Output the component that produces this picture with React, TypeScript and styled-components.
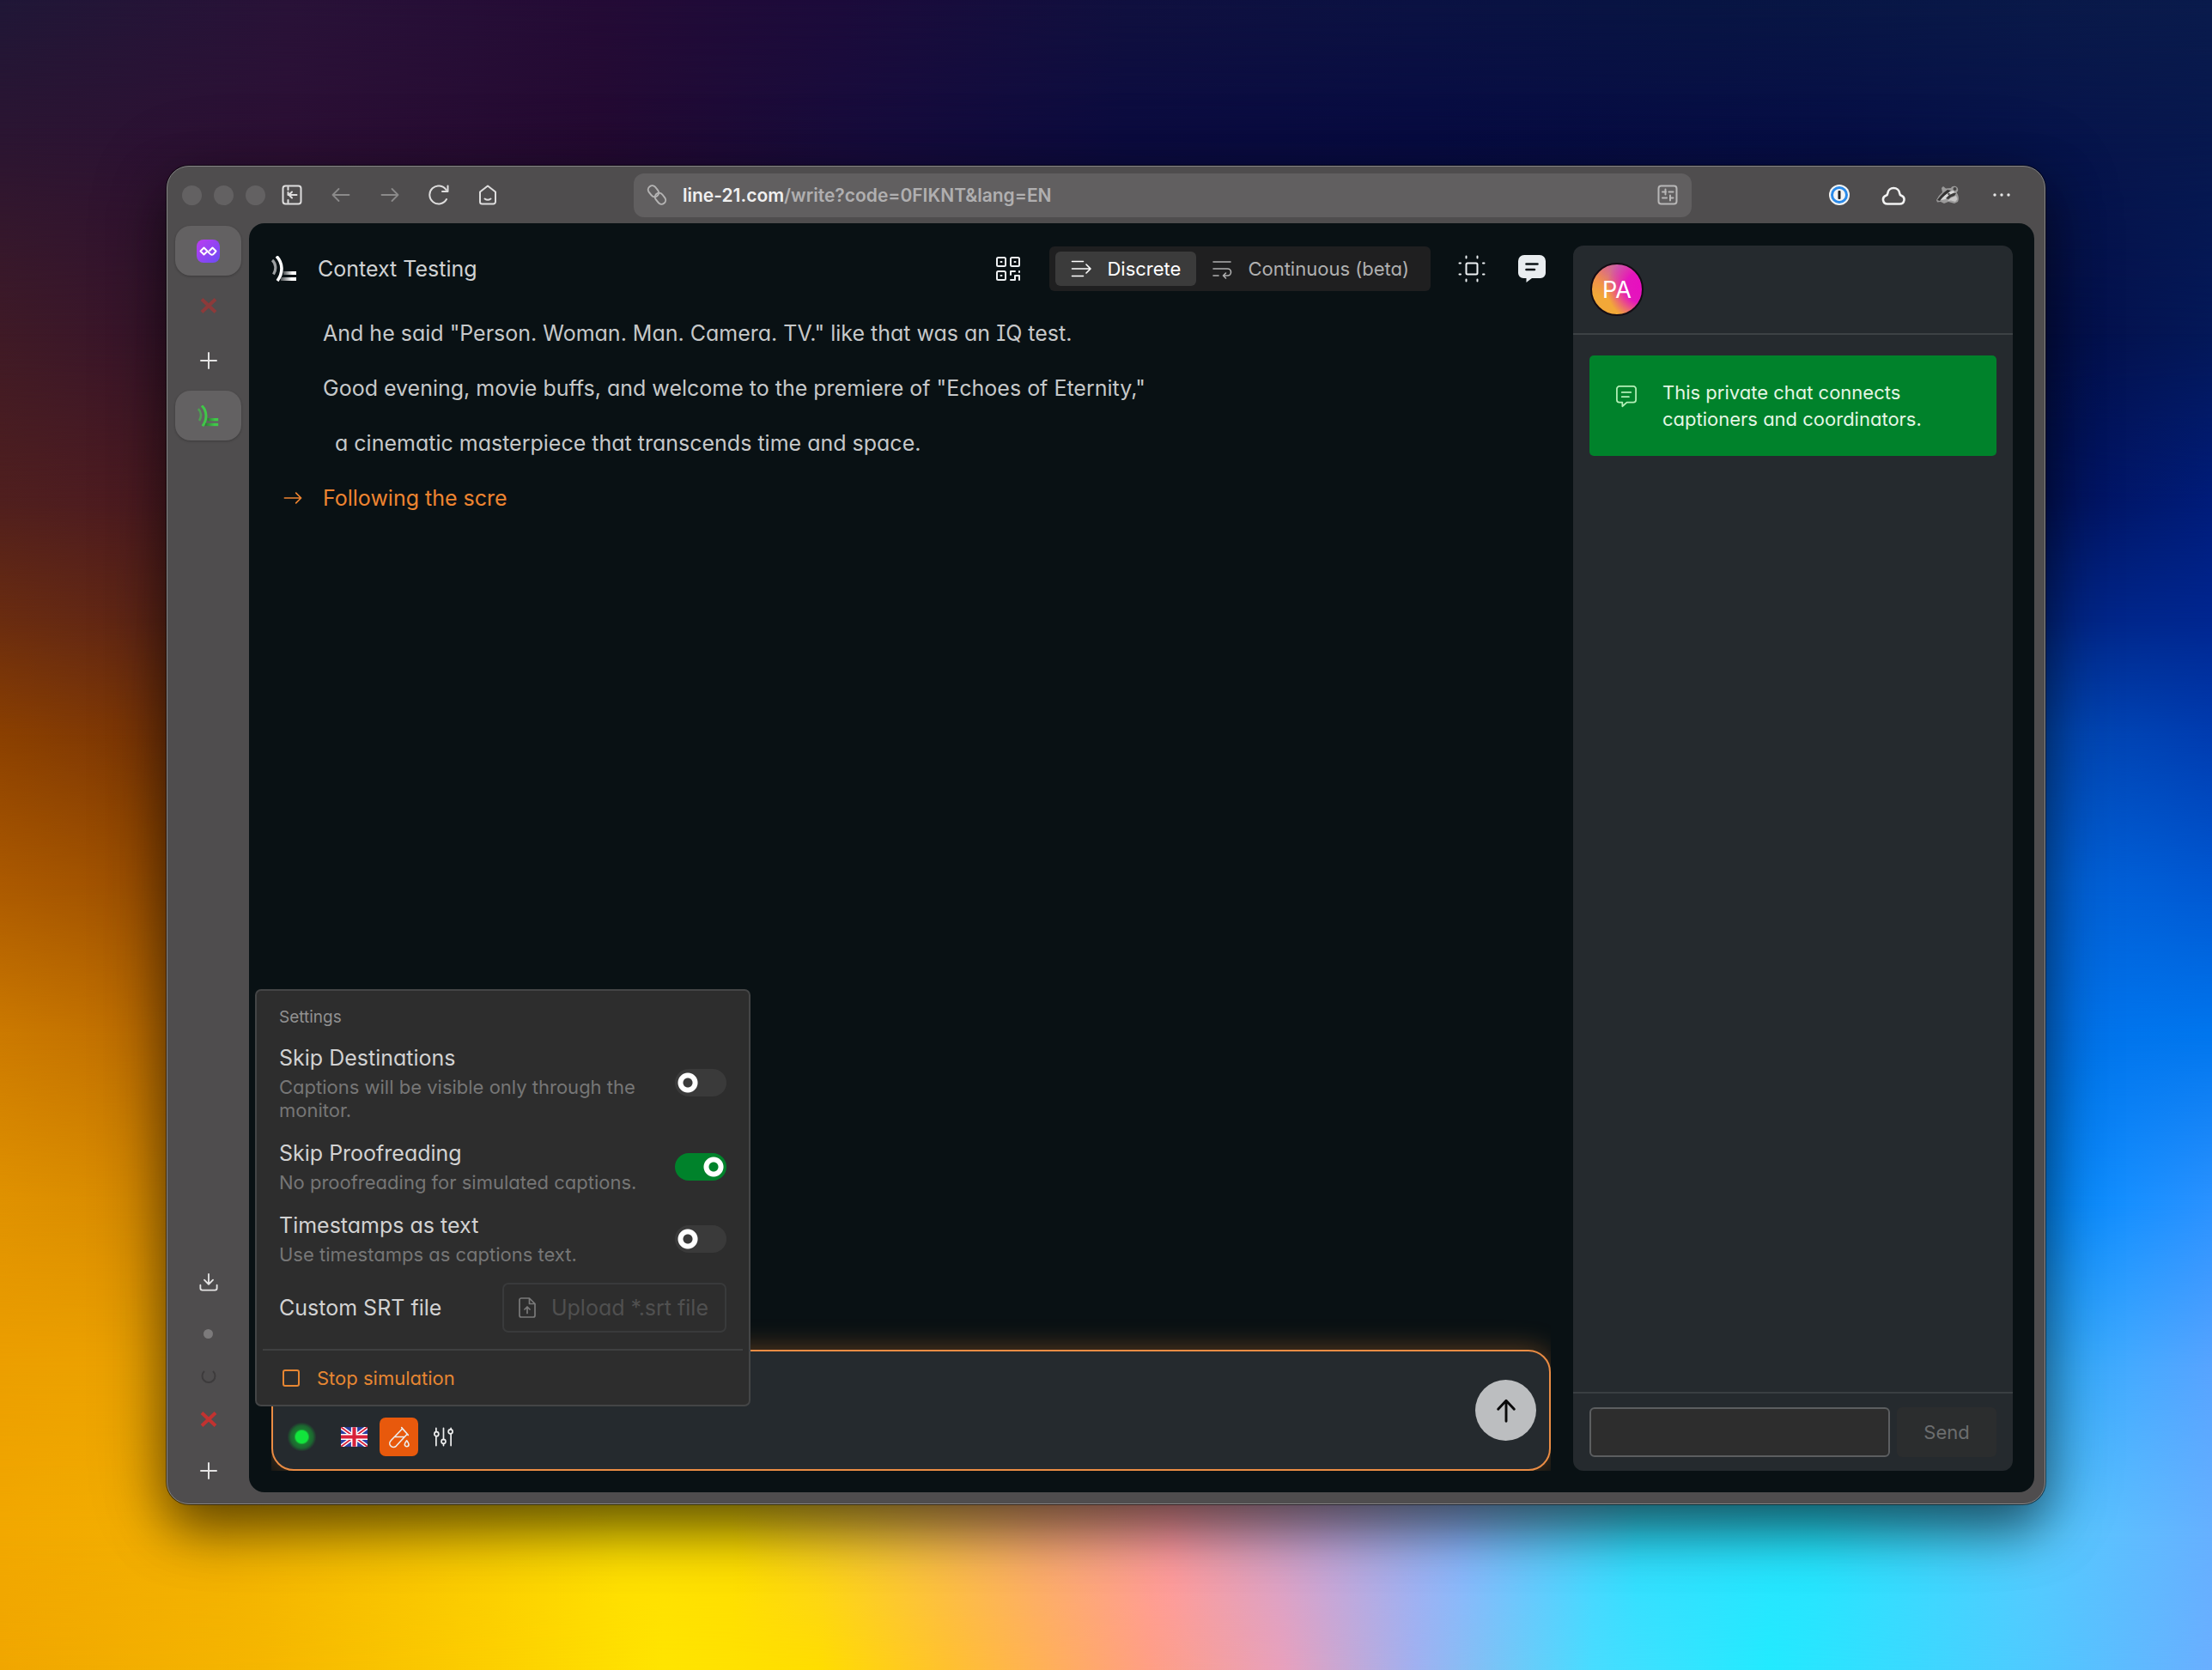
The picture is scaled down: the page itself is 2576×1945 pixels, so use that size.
import React, { useState } from "react";
import styled, { createGlobalStyle, css } from "styled-components";

const color = {
  chrome: "#4f4d4e",
  chromeRaised: "#636162",
  canvas: "#091114",
  panel: "#252a2e",
  popover: "#2d2d2d",
  orange: "#ee8430",
  green: "#00822b",
};

const GlobalStyle = createGlobalStyle`
  *, *::before, *::after { box-sizing: border-box; }
  body {
    margin: 0;
    font-family: Inter, "Liberation Sans", sans-serif;
    font-size: 22px;
    color: #c9cbcc;
    font-feature-settings: "cv11", "cv08";
    -webkit-font-smoothing: antialiased;
  }
  button, input, textarea { font: inherit; font-feature-settings: inherit; color: inherit; margin: 0; }
  button { cursor: pointer; border: 0; background: none; padding: 0; }
  h1, h2, p, ol { margin: 0; padding: 0; font-weight: 400; }
  svg { display: block; }
`;

/* ---------- wallpaper ---------- */

type Band = { at: number; stops: string };

const bands: Band[] = [
  { at: 0, stops: "#201737 0%, #291238 13%, #240b36 27%, #1c0b3b 38%, #10103f 51%, #0b1243 64%, #081543 77%, #0a1b4c 100%" },
  { at: 8, stops: "#2b1532 0%, #2c1035 13%, #240a32 27%, #180c3c 38%, #0c0c40 51%, #080c42 64%, #070f46 83%, #07184e 100%" },
  { at: 20, stops: "#3f1a26 0%, #37142c 8%, #250c36 30%, #0a0c40 55%, #040e48 92%, #041858 100%" },
  { at: 30, stops: "#501f1e 0%, #4b1a22 8%, #260c36 50%, #02125a 92%, #001c7a 100%" },
  { at: 37, stops: "#6a2c10 0%, #5c2418 8%, #260c36 50%, #002684 92%, #002690 100%" },
  { at: 44, stops: "#8b4000 0%, #783408 8%, #402030 50%, #004cb8 92%, #003cb0 100%" },
  { at: 53, stops: "#ac5a00 0%, #9a4e00 8%, #604030 50%, #0066dc 92%, #0058d2 100%" },
  { at: 62, stops: "#cc7a00 0%, #bc6c00 8%, #806030 50%, #0074ec 92%, #0076ee 100%" },
  { at: 72, stops: "#e09200 0%, #d68a00 8%, #c0a060 50%, #008cff 92%, #2a92ff 100%" },
  { at: 82, stops: "#ec9f00 0%, #eca400 8%, #e8c020 30%, #ee9a90 52%, #40b8f0 80%, #34b0ff 93%, #58a4ff 100%" },
  { at: 92, stops: "#f2a800 0%, #f3b200 10%, #fac800 19%, #ffe000 28%, #ffdf00 33%, #fbc83a 40%, #fbac74 47%, #ff9ca4 53%, #c4a8dc 60%, #8cb8ff 66%, #30e0ff 74%, #26e6ff 82%, #56ccff 92%, #66b0ff 100%" },
  { at: 100, stops: "#f0a600 0%, #f5b600 12%, #fcce00 22%, #ffe400 30%, #ffdd00 37%, #ffc030 43%, #ff9e84 52%, #e8a0bc 58%, #a0b0f0 64%, #48dcff 72%, #22eaff 80%, #4cccff 91%, #6aaeff 100%" },
];

const WallpaperBand = styled.div<{ $stops: string; $from: number; $to: number }>`
  grid-area: 1 / 1;
  background: linear-gradient(90deg, ${(p) => p.$stops});
  ${(p) =>
    p.$to > 0 &&
    css`
      mask-image: linear-gradient(180deg, transparent ${p.$from}%, #000 ${p.$to}%);
    `}
`;

const Desktop = styled.div`
  display: grid;
  grid-template-columns: minmax(0, 1fr);
  min-height: 100vh;
`;

const DesktopArea = styled.div`
  grid-area: 1 / 1;
  z-index: 1;
  display: flex;
  padding: 193px 194px;
`;

/* ---------- browser chrome ---------- */

const BrowserWindow = styled.div`
  flex: 1;
  display: flex;
  flex-direction: column;
  background: ${color.chrome};
  border: 1px solid #858485;
  border-radius: 26px;
  box-shadow: 0 0 0 1px rgba(0, 0, 0, 0.55), 0 30px 60px rgba(0, 0, 0, 0.5), 0 10px 90px rgba(0, 0, 0, 0.25);
`;

const Toolbar = styled.div`
  display: flex;
  align-items: center;
  height: 66px;
`;

const ToolbarStart = styled.div`
  display: flex;
  align-items: center;
  width: 543px;
  padding-left: 17px;
`;

const TrafficLights = styled.div`
  display: flex;
  gap: 14px;
  margin-right: 19px;
`;

const Light = styled.span`
  width: 23px;
  height: 23px;
  border-radius: 50%;
  background: #636162;
`;

const NavButtons = styled.div`
  display: flex;
  gap: 33px;
`;

const IconButton = styled.button<{ $tone?: string; $size?: number }>`
  display: grid;
  place-items: center;
  width: ${(p) => p.$size ?? 24}px;
  height: ${(p) => p.$size ?? 24}px;
  color: ${(p) => p.$tone ?? "#dedddd"};
`;

const AddressBar = styled.div`
  flex: 1;
  display: flex;
  align-items: center;
  height: 51px;
  padding: 0 16px 0 15px;
  border-radius: 12px;
  background: #615f60;
  color: #b4b3b3;
`;

const Address = styled.span`
  flex: 1;
  margin-left: 18px;
  font-size: 21px;
  font-weight: 600;
  font-feature-settings: normal;
  color: #b0afb0;
`;

const Host = styled.span`
  color: #f0f0f0;
`;

const Extensions = styled.div`
  display: flex;
  justify-content: flex-end;
  align-items: center;
  gap: 35px;
  width: 411px;
  padding-right: 36px;
`;

const Body = styled.div`
  flex: 1;
  display: flex;
  padding-right: 12px;
`;

const Sidebar = styled.nav`
  display: flex;
  flex-direction: column;
  align-items: center;
  gap: 6px;
  width: 95px;
  padding: 3px 0 9px;
`;

const SideTab = styled.button<{ $raised?: boolean }>`
  display: grid;
  place-items: center;
  width: 77px;
  height: 58px;
  border-radius: 18px;
  color: #e4e3e3;
  ${(p) =>
    p.$raised &&
    css`
      background: ${color.chromeRaised};
      box-shadow: 0 1px 3px rgba(0, 0, 0, 0.25);
    `}
`;

const Spacer = styled.div`
  flex: 1;
`;

const SideStatus = styled.div`
  display: grid;
  grid-auto-rows: 50px;
  place-items: center;
`;

const StatusDot = styled.span`
  width: 11px;
  height: 11px;
  border-radius: 50%;
  background: #7c7a7b;
`;

/* ---------- page ---------- */

const Page = styled.main`
  flex: 1;
  display: flex;
  gap: 26px;
  min-width: 0;
  margin-bottom: 13px;
  padding: 26px 25px 25px 26px;
  border-radius: 18px;
  background: ${color.canvas};
`;

const Writer = styled.section`
  flex: 1;
  display: flex;
  flex-direction: column;
  min-width: 0;
`;

const Header = styled.header`
  display: flex;
  align-items: center;
  gap: 28px;
  height: 53px;
`;

const Brand = styled.div`
  flex: 1;
  display: flex;
  align-items: center;
  gap: 24px;
`;

const Title = styled.h1`
  font-size: 25px;
  line-height: 34px;
  color: #d0d2d3;
`;

const Segments = styled.div`
  display: flex;
  height: 52px;
  padding: 6px 7px;
  border-radius: 6px;
  background: #1f1f20;
`;

const Segment = styled.button<{ $active?: boolean }>`
  display: flex;
  align-items: center;
  gap: 18px;
  height: 40px;
  padding: 0 18px;
  border-radius: 6px;
  color: ${(p) => (p.$active ? "#ffffff" : "#b0b0b0")};
  background: ${(p) => (p.$active ? "#3b3b3b" : "transparent")};
`;

const Captions = styled.ol`
  flex: 1;
  padding-top: 17px;
  list-style: none;
  font-size: 25px;
  line-height: 64px;
`;

const Caption = styled.li<{ $live?: boolean; $nested?: boolean }>`
  display: flex;
  align-items: center;
  padding-left: ${(p) => (p.$nested ? 14 : 0)}px;
  color: ${(p) => (p.$live ? color.orange : "#c6c8c9")};
`;

const CaptionGutter = styled.span`
  display: flex;
  width: 60px;
  padding-left: 14px;
`;

const ComposerDock = styled.div`
  position: relative;
`;

const Composer = styled.form`
  display: flex;
  align-items: center;
  height: 141px;
  padding-right: 15px;
  border: 2px solid #ea8c44;
  border-radius: 26px;
  background: ${color.panel};
  box-shadow: 0 0 32px rgba(238, 132, 48, 0.4);
  clip-path: inset(-60px 0 0 0);
`;

const ComposerMain = styled.div`
  flex: 1;
  align-self: stretch;
  display: flex;
  flex-direction: column;
  padding: 12px 12px 15px 11px;
`;

const ComposerInput = styled.textarea`
  flex: 1;
  min-height: 0;
  border: 0;
  outline: 0;
  resize: none;
  background: transparent;
`;

const ComposerTools = styled.div`
  display: flex;
  align-items: center;
  gap: 7px;
`;

const LiveDot = styled.span`
  width: 45px;
  height: 45px;
  margin-right: 9px;
  background: radial-gradient(circle, #12e43c 7px, #1b7a30 9px, #1c6630 13px, transparent 17px);
`;

const ToolButton = styled.button<{ $active?: boolean }>`
  display: grid;
  place-items: center;
  width: 45px;
  height: 45px;
  border-radius: 7px;
  color: #eceded;
  background: ${(p) => (p.$active ? "#e8590c" : "transparent")};
`;

const SubmitButton = styled.button`
  display: grid;
  place-items: center;
  width: 71px;
  height: 71px;
  border-radius: 50%;
  color: #0a0a0a;
  background: #bcbec0;
`;

/* ---------- settings popover ---------- */

const Popover = styled.div`
  position: absolute;
  left: -19px;
  bottom: 75px;
  z-index: 2;
  width: 577px;
  border: 2px solid #444546;
  border-radius: 7px;
  background: ${color.popover};
`;

const PopoverTitle = styled.h2`
  padding: 17px 26px;
  font-size: 19px;
  line-height: 27px;
  color: #919191;
`;

const SettingList = styled.div`
  display: flex;
  flex-direction: column;
  gap: 19px;
  padding: 0 26px 19px;
`;

const SettingRow = styled.div`
  display: flex;
  align-items: center;
  justify-content: space-between;
  gap: 24px;
`;

const SettingText = styled.div`
  display: flex;
  flex-direction: column;
  gap: 4px;
`;

const SettingLabel = styled.label`
  font-size: 25px;
  line-height: 34px;
  color: #d2d2d2;
`;

const SettingHint = styled.p`
  line-height: 27px;
  color: #767676;
`;

const Toggle = styled.input`
  --track: #3a3a3a;
  flex: none;
  appearance: none;
  width: 60px;
  height: 32px;
  border-radius: 16px;
  cursor: pointer;
  background: radial-gradient(circle at 15px 16px, var(--track) 5px, #fff 6px, #fff 11px, transparent 12px), var(--track);
  &:checked {
    --track: ${color.green};
    background: radial-gradient(circle at 45px 16px, var(--track) 5px, #fff 6px, #fff 11px, transparent 12px), var(--track);
  }
`;

const UploadButton = styled.button`
  display: flex;
  align-items: center;
  gap: 16px;
  height: 58px;
  padding: 0 19px 0 15px;
  border: 2px solid #393a3b;
  border-radius: 7px;
  font-size: 25px;
  color: #505050;
  svg { color: #7a7a7a; }
`;

const Divider = styled.hr`
  height: 2px;
  margin: 0 7px;
  border: 0;
  background: #3f4041;
`;

const StopButton = styled.button`
  display: flex;
  align-items: center;
  gap: 20px;
  width: 100%;
  height: 63px;
  padding: 0 30px;
  color: #e68632;
`;

/* ---------- chat ---------- */

const Chat = styled.aside`
  display: flex;
  flex-direction: column;
  width: 512px;
  border-radius: 12px;
  background: ${color.panel};
`;

const ChatHeader = styled.div`
  display: flex;
  align-items: center;
  height: 104px;
  padding: 0 20px;
  border-bottom: 2px solid #3c4144;
`;

const Avatar = styled.div`
  display: grid;
  place-items: center;
  width: 62px;
  height: 62px;
  border: 2px solid #140c14;
  border-radius: 50%;
  font-size: 27px;
  color: #fff;
  background:
    radial-gradient(circle at 100% 45%, #e80ec0 0%, #e416bc 28%, rgba(228, 22, 188, 0) 62%),
    radial-gradient(circle at 55% 5%, #c866a8 0%, rgba(200, 102, 168, 0) 45%),
    linear-gradient(200deg, #e0508c 0%, #f08850 38%, #f2a838 70%);
`;

const ChatLog = styled.div`
  flex: 1;
  padding: 24px 19px;
`;

const Notice = styled.div`
  display: flex;
  gap: 28px;
  padding: 28px 29px 27px;
  border-radius: 5px;
  line-height: 31px;
  color: #e4f6e4;
  background: ${color.green};
`;

const NoticeIcon = styled.span`
  padding-top: 5px;
  color: #b4f0b8;
`;

const ChatForm = styled.form`
  display: flex;
  gap: 8px;
  padding: 16px 19px;
  border-top: 2px solid #3a3f42;
`;

const ChatInput = styled.input`
  flex: 1;
  min-width: 0;
  height: 58px;
  padding: 0 16px;
  border: 2px solid #5c5e60;
  border-radius: 6px;
  background: ${color.popover};
`;

const SendButton = styled.button`
  width: 116px;
  height: 58px;
  border-radius: 6px;
  color: #6c6d6e;
  background: #2b2d2e;
`;

/* ---------- icons ---------- */

type IconProps = { size?: number; box?: string; width?: number; children: React.ReactNode };
const Icon = ({ size = 24, box = "0 0 24 24", width = 2, children }: IconProps) => (
  <svg width={size} height={size} viewBox={box} fill="none" stroke="currentColor" strokeWidth={width} strokeLinecap="round" strokeLinejoin="round" aria-hidden="true">
    {children}
  </svg>
);

const Logo = ({ size, id, from, to }: { size: number; id: string; from: string; to: string }) => (
  <svg width={size} height={size} viewBox="0 0 30 30" fill="none" aria-hidden="true">
    <defs>
      <linearGradient id={id} x1="0" y1="0" x2="1" y2="0">
        <stop offset="0" stopColor={from} />
        <stop offset="0.7" stopColor={to} />
      </linearGradient>
    </defs>
    <path d="M1 5C5.500 9 6 16 2.500 21.500" stroke={to} strokeOpacity="0.6" strokeWidth="3.200" />
    <path d="M6 0.500C13.500 8 14 20 7 29" stroke={to} strokeWidth="3.600" />
    <rect x="14" y="18" width="15" height="4" fill={`url(#${id})`} />
    <rect x="11" y="25" width="18" height="4" fill={`url(#${id})`} />
  </svg>
);

const Cross = ({ tone }: { tone: string }) => (
  <svg width="20" height="20" viewBox="0 0 20 20" stroke={tone} strokeWidth="4" aria-hidden="true">
    <path d="M2 2.500l16 15M18 2.500l-16 15" />
  </svg>
);

const Flag = () => (
  <svg width="31" height="23" viewBox="0 0 60 44" aria-hidden="true">
    <rect width="60" height="44" fill="#2a3fa0" />
    <path d="M0 0L60 44M60 0L0 44" stroke="#fff" strokeWidth="9" />
    <path d="M0 0L60 44M60 0L0 44" stroke="#d8213a" strokeWidth="3.500" />
    <path d="M30 0V44M0 22H60" stroke="#fff" strokeWidth="14" />
    <path d="M30 0V44M0 22H60" stroke="#d8213a" strokeWidth="8" />
  </svg>
);

const Badger = () => (
  <svg width="28" height="24" viewBox="0 0 28 24" aria-hidden="true">
    <path d="M1 18L4 13L8 9L7 4L9 2L12 4.500L18 4C19 1.500 23 1 25 3C27 5 26.500 8 24.500 9C26.500 12 28 16 26 20L22 22L15 20L10 22L6 20L2 20.500Z" fill="#9a9999" />
    <path d="M2 18L6 13L10 9L14 6L18 7L13 11L8 15L5 19Z" fill="#343333" />
    <path d="M6 18L11 12.500L17 8L21 7L22 9L17 12L12 17Z" fill="#d8d8d8" />
    <path d="M12 16L16 12L21 10L24 10L22 13L18 14.500L15 17Z" fill="#3a3939" />
    <path d="M14 19L18 15.500L24 13L25.500 17L23 20L18 18.500Z" fill="#c6c5c5" />
    <circle cx="22.500" cy="5" r="2" fill="#454444" />
    <circle cx="15.500" cy="11" r="1.200" fill="#4a4949" />
  </svg>
);

const ChatGlyph = () => (
  <Icon size={28} width={2}>
    <path d="M5 2.500h14a2.500 2.500 0 0 1 2.500 2.500v11a2.500 2.500 0 0 1-2.500 2.500h-6.500L8 22.500v-4H5A2.500 2.500 0 0 1 2.500 16V5A2.500 2.500 0 0 1 5 2.500zM7.500 8.500h9M7.500 13h7" strokeWidth="1.500" />
  </Icon>
);

const captions = [
  { text: 'And he said "Person. Woman. Man. Camera. TV." like that was an IQ test.' },
  { text: 'Good evening, movie buffs, and welcome to the premiere of "Echoes of Eternity,"' },
  { text: "a cinematic masterpiece that transcends time and space.", nested: true },
  { text: "Following the scre", live: true },
];

const toggles = [
  { id: "skip-destinations", label: "Skip Destinations", hint: "Captions will be visible only through the monitor.", on: false },
  { id: "skip-proofreading", label: "Skip Proofreading", hint: "No proofreading for simulated captions.", on: true },
  { id: "timestamps", label: "Timestamps as text", hint: "Use timestamps as captions text.", on: false },
];

const dim = "#8b8a8a";

export default function App() {
  const [mode, setMode] = useState("discrete");

  return (
    <Desktop>
      <GlobalStyle />
      {bands.map((b, i) => (
        <WallpaperBand key={b.at} $stops={b.stops} $from={i ? bands[i - 1].at : 0} $to={b.at} />
      ))}
      <DesktopArea>
        <BrowserWindow>
          <Toolbar>
            <ToolbarStart>
              <TrafficLights>
                <Light /><Light /><Light />
              </TrafficLights>
              <NavButtons>
                <IconButton aria-label="Hide sidebar">
                  <Icon>
                    <rect x="1.500" y="1.500" width="21" height="21" rx="3" />
                    <path d="M7.500 3v3M7.500 9v3M7.500 18v3M8.500 12h9M12 8.500L8.500 12l3.500 3.500" />
                  </Icon>
                </IconButton>
                <IconButton aria-label="Back" $tone={dim}>
                  <Icon><path d="M21.500 12h-19M9.500 5L2.500 12l7 7" strokeWidth="1.800" /></Icon>
                </IconButton>
                <IconButton aria-label="Forward" $tone={dim}>
                  <Icon><path d="M2.500 12h19M14.500 5l7 7-7 7" strokeWidth="1.800" /></Icon>
                </IconButton>
                <IconButton aria-label="Reload">
                  <Icon><path d="M21 17A10.500 10.500 0 1 1 20.500 6M22.500 1.500V8h-6.500" /></Icon>
                </IconButton>
                <IconButton aria-label="Home">
                  <Icon><path d="M3 8.500L12 1.500l9 7V20a2.500 2.500 0 0 1-2.500 2.500h-13A2.500 2.500 0 0 1 3 20zM8.500 16.500c2 1.500 5 1.500 7 0" /></Icon>
                </IconButton>
              </NavButtons>
            </ToolbarStart>
            <AddressBar>
              <Icon width={2}>
                <rect x="1" y="3" width="14" height="9.500" rx="4.700" transform="rotate(52 8 7.700)" />
                <rect x="9" y="11.500" width="14" height="9.500" rx="4.700" transform="rotate(52 16 16.200)" />
              </Icon>
              <Address><Host>line-21.com</Host>/write?code=0FIKNT&amp;lang=EN</Address>
              <IconButton aria-label="Page settings" $tone="#b8b7b7">
                <Icon>
                  <rect x="1.500" y="1.500" width="21" height="21" rx="3" />
                  <path d="M6 8.500h4M9.500 5.500v6M13.500 8.500h5M6 15.500h5M15 12.500v6M15.500 15.500h3" />
                </Icon>
              </IconButton>
            </AddressBar>
            <Extensions>
              <IconButton aria-label="Password manager" $size={28}>
                <svg width="26" height="26" viewBox="0 0 26 26" aria-hidden="true">
                  <circle cx="13" cy="13" r="12" fill="#f4f4f4" />
                  <circle cx="13" cy="13" r="8.500" fill="#f4f4f4" stroke="#2b8ae8" strokeWidth="3" />
                  <rect x="11.500" y="8" width="3" height="10" rx="1" fill="#222" />
                </svg>
              </IconButton>
              <IconButton aria-label="Cloud" $size={28}>
                <Icon size={28} box="0 0 28 28" width={2.6}>
                  <path d="M7 24.500h14.500a5 5 0 0 0 1.700-9.700c-1.200-.5-1.900-1.400-2-2.700a7 7 0 0 0-13.900 0c-.1 1.300-.9 2.200-2 2.700A5 5 0 0 0 7 24.500z" stroke="#f2f2f2" />
                </Icon>
              </IconButton>
              <IconButton aria-label="Privacy" $size={28}><Badger /></IconButton>
              <IconButton aria-label="More" $size={28}>
                <svg width="22" height="6" viewBox="0 0 22 6" fill="#e6e6e6" aria-hidden="true">
                  <circle cx="3" cy="3" r="1.700" /><circle cx="11" cy="3" r="1.700" /><circle cx="19" cy="3" r="1.700" />
                </svg>
              </IconButton>
            </Extensions>
          </Toolbar>
          <Body>
            <Sidebar aria-label="Tabs">
              <SideTab $raised aria-label="Pinned tab">
                <svg width="27" height="27" viewBox="0 0 27 27" aria-hidden="true">
                  <defs>
                    <linearGradient id="pin" x1="0" y1="0" x2="1" y2="1">
                      <stop offset="0" stopColor="#bc3cf0" /><stop offset="1" stopColor="#6a4cf4" />
                    </linearGradient>
                  </defs>
                  <rect width="27" height="27" rx="8" fill="url(#pin)" />
                  <path d="M12.500 13.500L8.500 17.500L4.500 13.500L8.500 9.500L14.500 15.500C16.500 18 18.500 18.500 20 16.500L22.500 13.500L18.500 9.500L14.500 13.500" fill="none" stroke="#fff" strokeWidth="2" strokeLinejoin="round" />
                </svg>
              </SideTab>
              <SideTab aria-label="Close workspace"><Cross tone="#8c3a3a" /></SideTab>
              <SideTab aria-label="New tab"><Icon size={20} box="0 0 20 20"><path d="M10 1v18M1 10h18" /></Icon></SideTab>
              <SideTab $raised aria-label="Line 21 tab"><Logo size={25} id="tab-logo" from="#2f7a36" to="#40c848" /></SideTab>
              <Spacer />
              <SideTab aria-label="Downloads">
                <Icon size={22} width={2}><path d="M12 2v13M6.500 9.500L12 15l5.500-5.500M1.500 16v4a2.500 2.500 0 0 0 2.500 2.500h16a2.500 2.500 0 0 0 2.500-2.500v-4" /></Icon>
              </SideTab>
              <SideStatus>
                <StatusDot />
                <svg width="18" height="18" viewBox="0 0 18 18" fill="none" stroke="#3d3b3c" strokeWidth="2" aria-hidden="true"><path d="M4 3A7.500 7.500 0 1 0 14 3" /></svg>
                <Cross tone="#c23230" />
              </SideStatus>
              <SideTab aria-label="Add"><Icon size={20} box="0 0 20 20"><path d="M10 1v18M1 10h18" /></Icon></SideTab>
            </Sidebar>
            <Page>
              <Writer>
                <Header>
                  <Brand>
                    <Logo size={30} id="brand-logo" from="#4c5052" to="#ffffff" />
                    <Title>Context Testing</Title>
                  </Brand>
                  <IconButton aria-label="QR code" $size={40} $tone="#eef1f3">
                    <Icon size={28} box="0 0 28 28" width={2}>
                      <rect x="1" y="1" width="10" height="10" rx="1.500" />
                      <rect x="17" y="1" width="10" height="10" rx="1.500" />
                      <rect x="1" y="17" width="10" height="10" rx="1.500" />
                      <path d="M5.500 6h1M21.500 6h1M5.500 22h1M17 21v-4h5M27 17v1M17 27h5v-5h5v5" />
                    </Icon>
                  </IconButton>
                  <Segments role="group" aria-label="Mode">
                    <Segment $active={mode === "discrete"} aria-pressed={mode === "discrete"} onClick={() => setMode("discrete")}>
                      <Icon width={1.6}><path d="M1.500 3.500h13M1.500 12h21M18 7l5 5-5 5M1.500 20.500h13" /></Icon>
                      Discrete
                    </Segment>
                    <Segment $active={mode === "continuous"} aria-pressed={mode === "continuous"} onClick={() => setMode("continuous")}>
                      <Icon width={1.6}><path d="M2 4h20M2 12h16.500a4 4 0 0 1 0 8H14M16.500 17L13.500 20l3 3M2 20h6" /></Icon>
                      Continuous (beta)
                    </Segment>
                  </Segments>
                  <IconButton aria-label="Focus" $size={40} $tone="#eef1f3">
                    <Icon size={32} box="0 0 32 32" width={2}>
                      <rect x="9.500" y="9.500" width="13" height="13" rx="1.500" />
                      <path d="M9.500 1.500v2M22.500 1.500v2M9.500 28.500v2M22.500 28.500v2M1.500 9.500h1.500M1.500 22.500h1.500M29 9.500h1.500M29 22.500h1.500" />
                    </Icon>
                  </IconButton>
                  <IconButton aria-label="Chat" $size={44}>
                    <svg width="32" height="32" viewBox="0 0 32 32" aria-hidden="true">
                      <path d="M7 0h18a7 7 0 0 1 7 7v14a6 6 0 0 1-6 6H16l-6.500 5V27H6a6 6 0 0 1-6-6V7a7 7 0 0 1 7-7z" fill="#e9edf0" />
                      <path d="M9.500 10.500h13M9.500 17h9.500" stroke="#0b1215" strokeWidth="2.600" strokeLinecap="round" />
                    </svg>
                  </IconButton>
                </Header>
                <Captions>
                  {captions.map((c) => (
                    <Caption key={c.text} $live={c.live} $nested={c.nested}>
                      <CaptionGutter>
                        {c.live && (
                          <Icon size={22} width={1.8}><path d="M1.500 12h21M16 5.500l6.500 6.500-6.500 6.500" /></Icon>
                        )}
                      </CaptionGutter>
                      {c.text}
                    </Caption>
                  ))}
                </Captions>
                <ComposerDock>
                  <Composer onSubmit={(e) => e.preventDefault()}>
                    <ComposerMain>
                      <ComposerInput aria-label="Caption" />
                      <ComposerTools>
                        <LiveDot />
                        <ToolButton type="button" aria-label="Language: English"><Flag /></ToolButton>
                        <ToolButton type="button" $active aria-label="Simulation">
                          <Icon size={26} width={1.5}>
                            <path d="M14.500 1.500l7 8M15.500 2.500L3 15.500a4 4 0 0 0 5.500 6L20.500 8.500M7 11.500h10M20 15.500c-1.500 2-2.200 3-2.200 4.200a2.200 2.200 0 0 0 4.400 0c0-1.200-.7-2.200-2.200-4.200z" />
                          </Icon>
                        </ToolButton>
                        <ToolButton type="button" aria-label="Adjust">
                          <Icon size={23} width={1.8}>
                            <path d="M3 1.500v4M3 11v11.500M12 1.500V15M12 20.500v2M21 1.500v1M21 8v14.500" />
                            <circle cx="3.500" cy="8.500" r="2.600" /><circle cx="12" cy="17.500" r="2.600" /><circle cx="20.500" cy="5.500" r="2.600" />
                          </Icon>
                        </ToolButton>
                      </ComposerTools>
                    </ComposerMain>
                    <SubmitButton aria-label="Send caption">
                      <Icon size={28} width={2.5}><path d="M12 22.500V2M4 10.500L12 2l8 8.500" /></Icon>
                    </SubmitButton>
                  </Composer>
                  <Popover role="dialog" aria-label="Settings">
                    <PopoverTitle>Settings</PopoverTitle>
                    <SettingList>
                      {toggles.map((t) => (
                        <SettingRow key={t.id}>
                          <SettingText>
                            <SettingLabel htmlFor={t.id}>{t.label}</SettingLabel>
                            <SettingHint>{t.hint}</SettingHint>
                          </SettingText>
                          <Toggle id={t.id} type="checkbox" role="switch" defaultChecked={t.on} />
                        </SettingRow>
                      ))}
                      <SettingRow>
                        <SettingLabel htmlFor="upload">Custom SRT file</SettingLabel>
                        <UploadButton id="upload" disabled>
                          <Icon width={1.7}>
                            <path d="M5 1h9.500L21 7.500V21a2 2 0 0 1-2 2H5a2 2 0 0 1-2-2V3a2 2 0 0 1 2-2zM14.500 1v6.500H21M12 18.500v-7M9 14l3-3 3 3" />
                          </Icon>
                          Upload *.srt file
                        </UploadButton>
                      </SettingRow>
                    </SettingList>
                    <Divider />
                    <StopButton>
                      <Icon size={20} box="0 0 20 20" width={2}><rect x="1" y="1" width="18" height="18" rx="2" /></Icon>
                      Stop simulation
                    </StopButton>
                  </Popover>
                </ComposerDock>
              </Writer>
              <Chat aria-label="Chat">
                <ChatHeader><Avatar>PA</Avatar></ChatHeader>
                <ChatLog>
                  <Notice>
                    <NoticeIcon><ChatGlyph /></NoticeIcon>
                    <p>This private chat connects captioners and coordinators.</p>
                  </Notice>
                </ChatLog>
                <ChatForm onSubmit={(e) => e.preventDefault()}>
                  <ChatInput aria-label="Message" />
                  <SendButton disabled>Send</SendButton>
                </ChatForm>
              </Chat>
            </Page>
          </Body>
        </BrowserWindow>
      </DesktopArea>
    </Desktop>
  );
}
